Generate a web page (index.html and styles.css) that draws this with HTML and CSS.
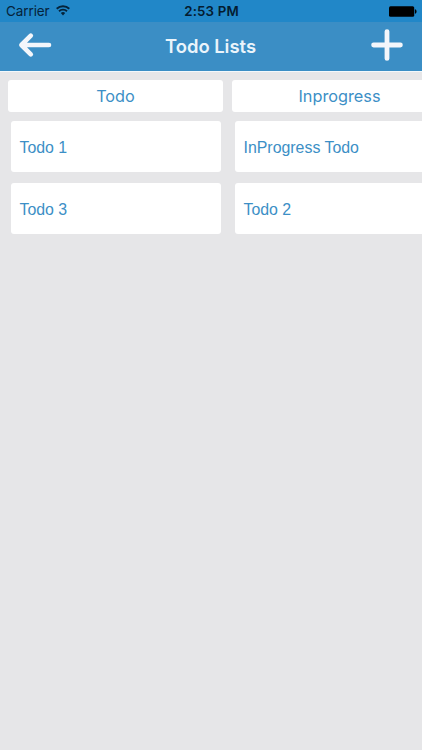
FILE: index.html
```html
<!DOCTYPE html>
<html lang="en">
<head>
<meta charset="utf-8">
<title>Todo Lists</title>
<link rel="stylesheet" href="styles.css">
</head>
<body>
<div class="status">
  <div class="carrier"><span class="carrier-name">Carrier</span>
    <svg class="wifi" width="14" height="11" viewBox="0 0 14 11" fill="none" stroke="#05233a" stroke-width="1.9"><path d="M.7 3.8a9 9 0 0 1 12.6 0M3 6.3a5.7 5.7 0 0 1 8 0"/><path d="M4.8 8.1a3.1 3.1 0 0 1 4.4 0L7 10.4z" fill="#05233a" stroke="none"/></svg>
  </div>
  <time class="clock">2:53 PM</time>
  <svg class="battery" width="28" height="11" viewBox="0 0 28 11"><rect y=".3" width="25.2" height="10.4" rx="1.5"/><path d="M25.9 3.3c2.2.3 2.2 4.1 0 4.4z"/></svg>
</div>
<header class="nav">
  <svg class="back" width="34" height="26" viewBox="0 0 34 26" fill="none" stroke="#f3f6fb" stroke-width="4.6" stroke-linecap="round" stroke-linejoin="round"><path d="M31 13H4M12.8 3.6L3.4 13l9.4 9.4"/></svg>
  <h1 class="title">Todo Lists</h1>
  <svg class="add" width="32" height="34" viewBox="0 0 32 34" fill="none" stroke="#f3f6fb" stroke-width="4.8" stroke-linecap="round"><path d="M16 3.6v26.8M2.6 17h26.8"/></svg>
</header>
<main class="board">
  <section class="column">
    <h2 class="heading">Todo</h2>
    <div class="card">Todo 1</div>
    <div class="card">Todo 3</div>
  </section>
  <section class="column">
    <h2 class="heading">Inprogress</h2>
    <div class="card">InProgress Todo</div>
    <div class="card">Todo 2</div>
  </section>
</main>
</body>
</html>
```
FILE: styles.css
```css
* { box-sizing: border-box; }
body {
  margin: 0;
  height: 750px;
  overflow: hidden;
  background: #e6e6e8;
  font-family: "Liberation Sans", Arial, sans-serif;
}
.status {
  display: grid;
  grid-template-columns: 1fr auto 1fr;
  align-items: center;
  height: 22px;
  padding: 0 5px 0 6px;
  background: #2187c8;
  color: #05233a;
}
.carrier { display: flex; align-items: center; gap: 6px; }
.carrier-name { font: 13.5px/22px Inter, sans-serif; letter-spacing: -0.1px; }
.wifi { margin-top: -2px; }
.clock { font: 600 13.3px/22px Inter, sans-serif; color: #041c30; letter-spacing: 0.15px; }
.battery { justify-self: end; fill: #000; }
.nav {
  display: grid;
  grid-template-columns: 1fr auto 1fr;
  align-items: center;
  height: 49px;
  padding: 0 19px 0 18px;
  background: #3b8ec5;
}
.back { margin-top: -4px; }
.title { margin: 0; font: 600 18.4px/49px Inter, sans-serif; color: #eaf4fb; }
.add { justify-self: end; margin-top: -3px; }
.board {
  display: flex;
  gap: 9px;
  height: 679px;
  padding: 8px 0 0 8px;
  border-top: 1px solid #f3f8fb;
  overflow: hidden;
}
.column { flex: 0 0 215px; }
.heading {
  margin: 0 0 9px;
  height: 32px;
  border-radius: 3px;
  background: #fff;
  color: #3c8fc6;
  font: 400 16.3px/33px Inter, sans-serif;
  text-align: center;
}
.card {
  height: 51px;
  margin: 0 2px 11px 3px;
  padding-left: 8.5px;
  border-radius: 3px;
  background: #fff;
  color: #3c8fc6;
  font-size: 15.9px;
  line-height: 53px;
}
```
